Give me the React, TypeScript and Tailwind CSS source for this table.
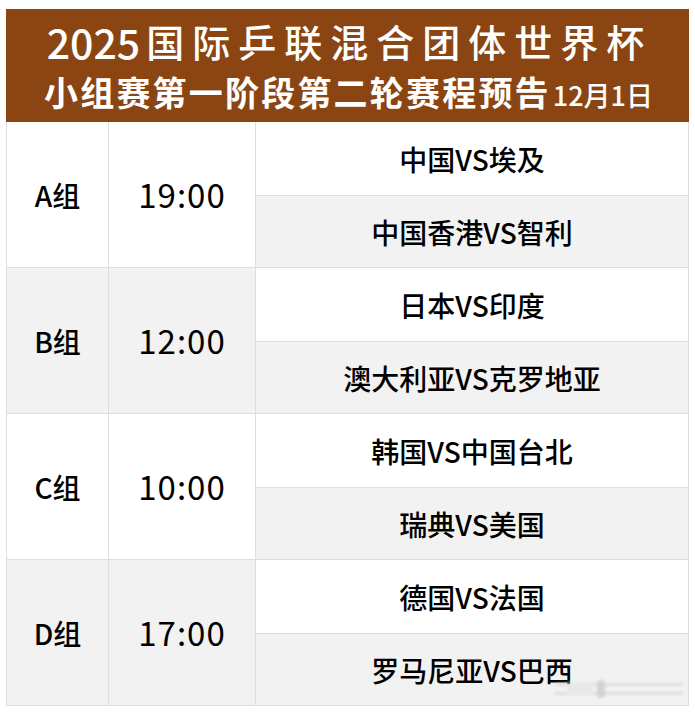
const groups = [
  { name: 'A组', time: '19:00', matches: ['中国VS埃及', '中国香港VS智利'] },
  { name: 'B组', time: '12:00', matches: ['日本VS印度', '澳大利亚VS克罗地亚'] },
  { name: 'C组', time: '10:00', matches: ['韩国VS中国台北', '瑞典VS美国'] },
  { name: 'D组', time: '17:00', matches: ['德国VS法国', '罗马尼亚VS巴西'] },
]

const font = { fontFamily: '"Noto Sans CJK SC", "Noto Sans", sans-serif' }

export default function App() {
  return (
    <div className="relative w-[695px] h-[717px] bg-white pt-[9px] px-[6px]" style={font}>
      {/* Header */}
      <div className="w-[683px] h-[113px] bg-[#8b4513] text-white flex flex-col items-center">
        <div className="mt-[10px] h-[44px] flex items-center leading-none font-medium pl-[4px]">
          <span className="text-[41px] mr-[6px]">2025</span>
          <span className="text-[38px] tracking-[8px]">国际乒联混合团体世界杯</span>
        </div>
        <div className="mt-[6px] h-[40px] flex items-end font-bold leading-none pl-[2px]">
          <span className="text-[34px] tracking-[2.2px]">小组赛第一阶段第二轮赛程预告</span>
          <span className="text-[27px] font-medium mb-[1px] ml-[2px]">12月1日</span>
        </div>
      </div>

      {/* Table */}
      <div className="w-[683px] border-l border-r border-b border-[#dedede] text-black">
        {groups.map((g, gi) => (
          <div key={g.name} className={`flex ${gi > 0 ? 'border-t border-[#dedede]' : ''}`}>
            <div
              className={`w-[102px] shrink-0 flex items-center justify-center text-[28px] font-medium border-r border-[#dedede] ${gi % 2 ? 'bg-[#f2f2f2]' : 'bg-white'}`}
            >
              {g.name}
            </div>
            <div
              className={`w-[147px] shrink-0 flex items-center justify-center text-[33px] tracking-[1px] border-r border-[#dedede] ${gi % 2 ? 'bg-[#f2f2f2]' : 'bg-white'}`}
            >
              {g.time}
            </div>
            <div className="flex-1 flex flex-col">
              {g.matches.map((m, mi) => (
                <div
                  key={m}
                  className={`flex items-center justify-center text-[28px] font-medium ${mi === 1 ? 'bg-[#f2f2f2] border-t border-[#dedede] h-[72px]' : 'bg-white h-[73px]'}`}
                >
                  {m}
                </div>
              ))}
            </div>
          </div>
        ))}
      </div>

      {/* watermark */}
      <div className="absolute left-[555px] top-[680px] w-[130px] h-[20px] opacity-60 blur-[1.5px] pointer-events-none">
        <div className="absolute left-0 top-[3px] w-[128px] h-[3px] bg-[#cfcfcf]" />
        <div className="absolute left-0 top-[12px] w-[128px] h-[3px] bg-[#cfcfcf]" />
        <div className="absolute left-[42px] top-0 w-[8px] h-[18px] rounded bg-[#bdbdbd]" />
        <div className="absolute left-[12px] top-[2px] w-[26px] h-[14px] bg-[#e3e3e3]" />
      </div>
    </div>
  )
}
